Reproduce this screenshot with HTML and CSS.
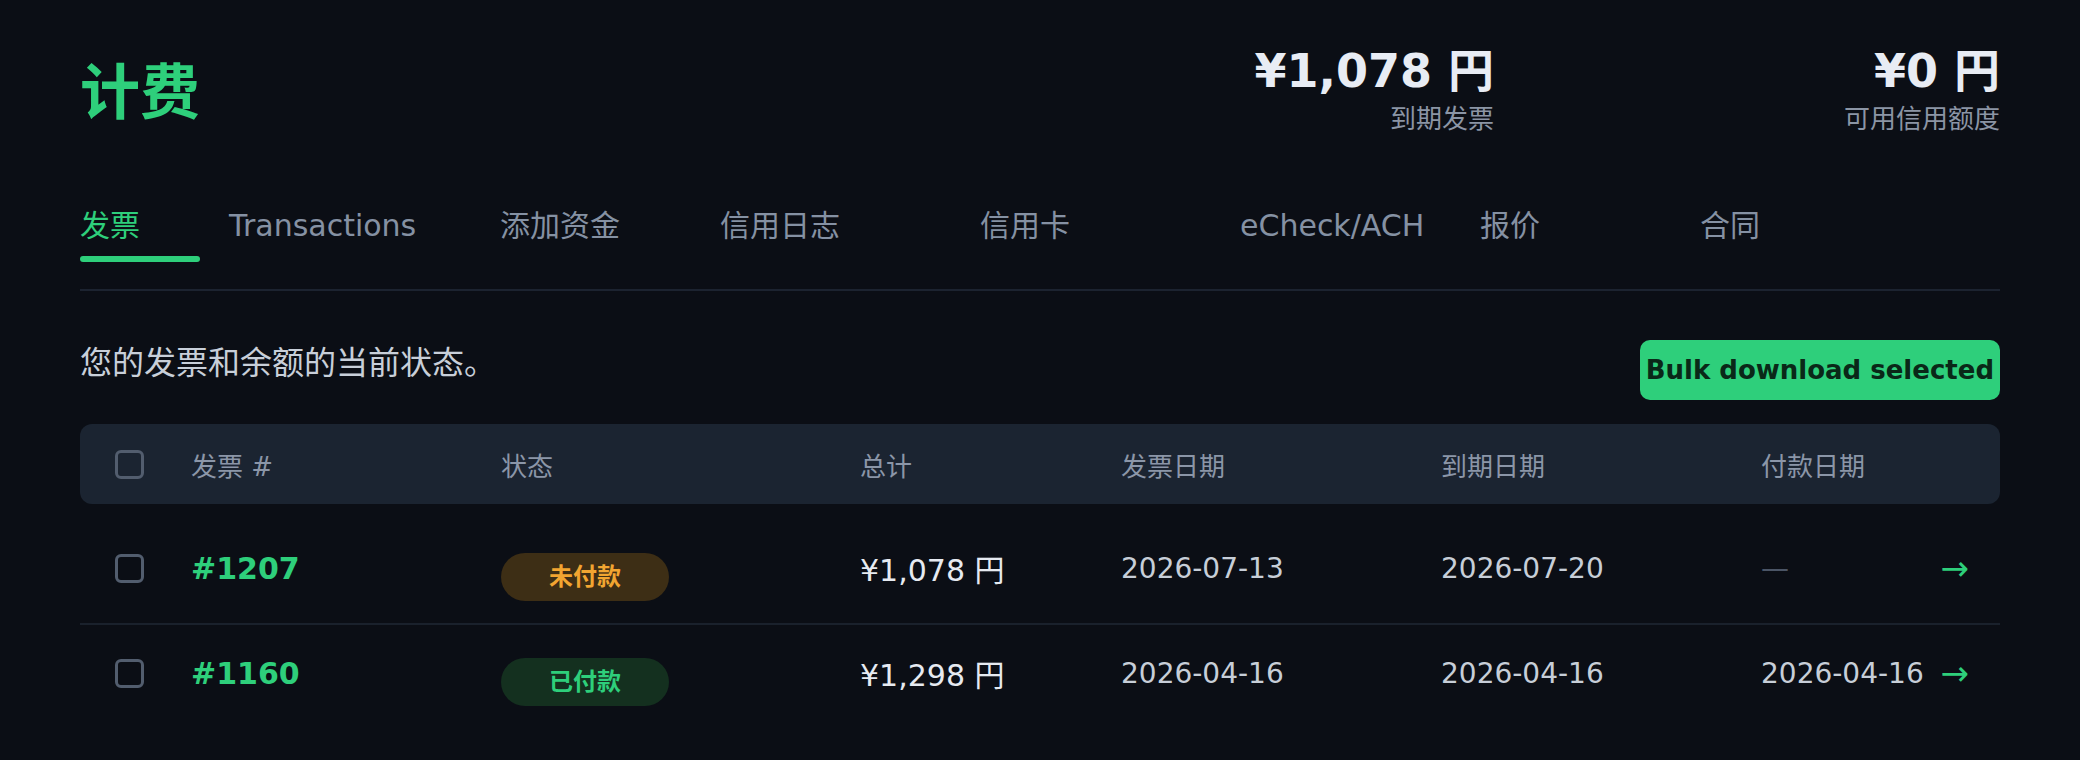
FILE: index.html
```html
<!DOCTYPE html>
<html lang="zh">

<head>
    <meta charset="UTF-8">
    <meta name="viewport" content="width=device-width, initial-scale=1.0">
    <title>计费</title>
    <link rel="stylesheet" href="styles.css">
</head>

<body>
    <div class="page">

        <!-- Header -->
        <header class="top">
            <h1 class="title">计费</h1>
            <div class="stats">
                <div class="stat">
                    <div class="stat-value">¥1,078 円</div>
                    <div class="stat-label">到期发票</div>
                </div>
                <div class="stat">
                    <div class="stat-value">¥0 円</div>
                    <div class="stat-label">可用信用额度</div>
                </div>
            </div>
        </header>

        <!-- Tabs -->
        <nav class="tabs">
            <a class="tab active" href="#">发票<span class="tab-bar"></span></a>
            <a class="tab" href="#">Transactions</a>
            <a class="tab" href="#">添加资金</a>
            <a class="tab" href="#">信用日志</a>
            <a class="tab" href="#">信用卡</a>
            <a class="tab" href="#">eCheck/ACH</a>
            <a class="tab" href="#">报价</a>
            <a class="tab" href="#">合同</a>
        </nav>

        <div class="toolbar">
            <p class="subtitle">您的发票和余额的当前状态。</p>
            <button class="btn-bulk">Bulk download selected</button>
        </div>

        <!-- Invoice table -->
        <div class="invoice-table">
            <div class="row head">
                <div class="cell"><span class="check"></span></div>
                <div class="cell">发票 #</div>
                <div class="cell">状态</div>
                <div class="cell">总计</div>
                <div class="cell">发票日期</div>
                <div class="cell">到期日期</div>
                <div class="cell">付款日期</div>
                <div class="cell"></div>
            </div>

            <div class="row">
                <div class="cell"><span class="check"></span></div>
                <div class="cell"><a class="inv-no" href="#">#1207</a></div>
                <div class="cell"><span class="badge unpaid">未付款</span></div>
                <div class="cell total">¥1,078 円</div>
                <div class="cell date">2026-07-13</div>
                <div class="cell date">2026-07-20</div>
                <div class="cell date muted">—</div>
                <div class="cell arrow">→</div>
            </div>

            <div class="row">
                <div class="cell"><span class="check"></span></div>
                <div class="cell"><a class="inv-no" href="#">#1160</a></div>
                <div class="cell"><span class="badge paid">已付款</span></div>
                <div class="cell total">¥1,298 円</div>
                <div class="cell date">2026-04-16</div>
                <div class="cell date">2026-04-16</div>
                <div class="cell date">2026-04-16</div>
                <div class="cell arrow">→</div>
            </div>
        </div>

    </div>
</body>

</html>
```

FILE: styles.css
```css
/* General Reset */
* {
    margin: 0;
    padding: 0;
    box-sizing: border-box;
}

body {
    font-family: 'DejaVu Sans', 'Noto Sans CJK SC', sans-serif;
    background-color: #0b0e15;
    color: #dfe4ec;
}

a {
    text-decoration: none;
}

.page {
    padding: 0 80px;
}

/* Header */
.top {
    display: flex;
    justify-content: space-between;
    align-items: flex-start;
    padding-top: 44px;
}

.title {
    margin-top: 19px;
    font-size: 60px;
    line-height: 60px;
    font-weight: bold;
    color: #2ecf7b;
}

.stats {
    display: flex;
    gap: 350px;
}

.stat {
    text-align: right;
}

.stat-value {
    font-size: 46px;
    line-height: 55px;
    font-weight: bold;
    color: #e8ecf4;
}

.stat-label {
    margin-top: 3px;
    font-size: 26px;
    line-height: 34px;
    color: #8b95a5;
}

/* Tabs */
.tabs {
    display: grid;
    grid-template-columns: 149px 271px 220px 260px 260px 240px 220px 1fr;
    margin-top: 72px;
    padding-bottom: 27px;
    border-bottom: 2px solid #1c2330;
}

.tab {
    font-size: 30px;
    line-height: 36px;
    color: #8591a3;
    padding-bottom: 18px;
}

.tab.active {
    color: #2ecf7b;
    padding-bottom: 0;
}

.tab-bar {
    display: block;
    width: 120px;
    height: 6px;
    margin-top: 12px;
    border-radius: 3px;
    background: #2ecf7b;
}

/* Toolbar */
.toolbar {
    display: flex;
    justify-content: space-between;
    align-items: flex-start;
    margin-top: 49px;
}

.subtitle {
    font-size: 32px;
    line-height: 46px;
    color: #c8cfd9;
}

.btn-bulk {
    height: 60px;
    padding: 0 6px;
    border: none;
    border-radius: 10px;
    background: #2ecf7b;
    color: #0a2818;
    font-family: inherit;
    font-size: 26px;
    font-weight: bold;
}

/* Table */
.invoice-table {
    margin-top: 24px;
}

.row {
    display: grid;
    grid-template-columns: 111px 310px 359px 261px 320px 320px 1fr auto;
    align-items: center;
    height: 104px;
    padding-bottom: 8px;
    border-bottom: 2px solid #1a212c;
    font-size: 28px;
}

.row:last-child {
    border-bottom: none;
    padding-bottom: 6px;
    height: 102px;
}

.row.head {
    height: 80px;
    padding-bottom: 0;
    margin-bottom: 17px;
    border-bottom: none;
    border-radius: 12px;
    background: #1b2431;
    font-size: 26px;
    color: #8b96a8;
}

.check {
    display: block;
    width: 29px;
    height: 29px;
    margin-left: 35px;
    border: 3px solid #525d6e;
    border-radius: 6px;
}

.inv-no {
    font-size: 30px;
    font-weight: bold;
    color: #2ecf7b;
}

.badge {
    display: block;
    width: 168px;
    height: 48px;
    margin-top: 18px;
    border-radius: 24px;
    font-size: 24px;
    line-height: 48px;
    font-weight: bold;
    text-align: center;
}

.badge.unpaid {
    background: #3d2e15;
    color: #f2a531;
}

.badge.paid {
    background: #14301f;
    color: #2ecf7b;
}

.total {
    font-size: 30px;
    color: #e6eaf1;
}

.date {
    color: #c7ced8;
}

.date.muted {
    color: #4b5566;
}

.arrow {
    padding-right: 31px;
    font-size: 34px;
    line-height: 1;
    color: #2ecf7b;
}
```
